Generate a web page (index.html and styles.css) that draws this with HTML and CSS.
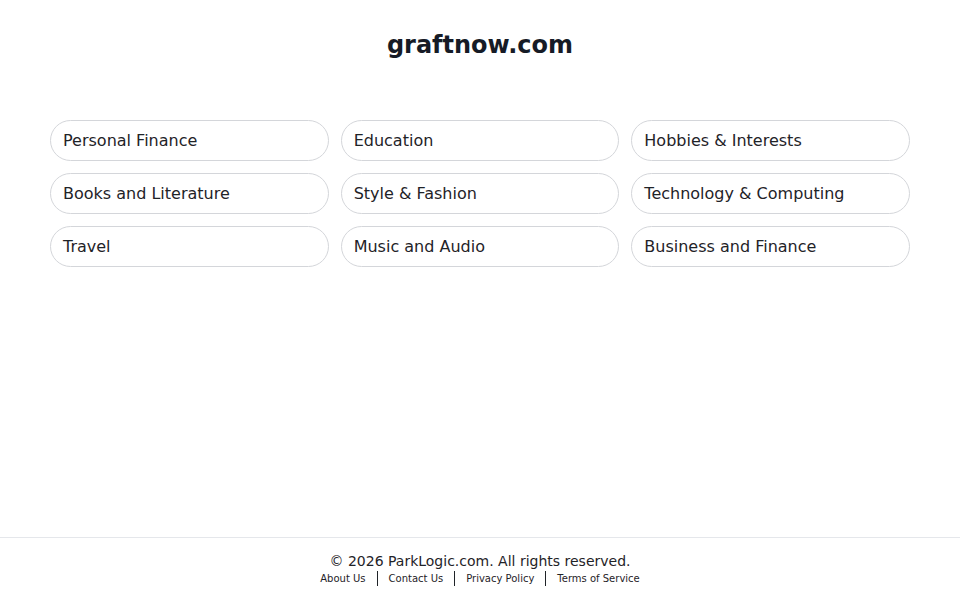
FILE: index.html
```html
<!DOCTYPE html>
<html lang="en">
<head>
<meta charset="utf-8">
<title>graftnow.com</title>
<link rel="stylesheet" href="styles.css">
</head>
<body>
<div class="page">
  <header class="header">
    <h1 class="title">graftnow.com</h1>
  </header>
  <main class="grid">
    <a class="pill" href="#">Personal Finance</a>
    <a class="pill" href="#">Education</a>
    <a class="pill" href="#">Hobbies &amp; Interests</a>
    <a class="pill" href="#">Books and Literature</a>
    <a class="pill" href="#">Style &amp; Fashion</a>
    <a class="pill" href="#">Technology &amp; Computing</a>
    <a class="pill" href="#">Travel</a>
    <a class="pill" href="#">Music and Audio</a>
    <a class="pill" href="#">Business and Finance</a>
  </main>
  <footer class="footer">
    <div class="copy">© 2026 ParkLogic.com. All rights reserved.</div>
    <nav class="links">
      <a href="#">About Us</a><span class="sep"></span>
      <a href="#">Contact Us</a><span class="sep"></span>
      <a href="#">Privacy Policy</a><span class="sep"></span>
      <a href="#">Terms of Service</a>
    </nav>
  </footer>
</div>
</body>
</html>
```

FILE: styles.css
```css
* { box-sizing: border-box; }
html, body { margin: 0; padding: 0; background: #ffffff; }
body {
  font-family: "DejaVu Sans", sans-serif;
  color: #1f2328;
}
.page {
  min-height: 100vh;
  display: flex;
  flex-direction: column;
}
.header {
  padding-top: 31px;
  text-align: center;
}
.title {
  margin: 0;
  font-size: 24px;
  line-height: 28px;
  font-weight: bold;
  color: #161b26;
}
.grid {
  margin: 61px 50px 0;
  display: grid;
  grid-template-columns: repeat(3, 1fr);
  column-gap: 12px;
  row-gap: 12px;
}
.pill {
  display: block;
  border: 1px solid #d4d6da;
  border-radius: 21px;
  padding: 10px 12px 9px;
  font-size: 16px;
  line-height: 20px;
  color: #1f2328;
  text-decoration: none;
}
.footer {
  margin-top: auto;
  border-top: 1px solid #e5e7eb;
  padding: 13px 0 14px;
  text-align: center;
}
.copy {
  font-size: 14px;
  line-height: 20px;
  color: #1f2328;
}
.links {
  display: flex;
  justify-content: center;
  align-items: center;
  height: 15px;
}
.links a {
  font-size: 10px;
  line-height: 13px;
  color: #1f2328;
  text-decoration: none;
}
.sep {
  width: 1px;
  height: 15px;
  background: #1f2328;
  margin: 0 11px;
}
```
